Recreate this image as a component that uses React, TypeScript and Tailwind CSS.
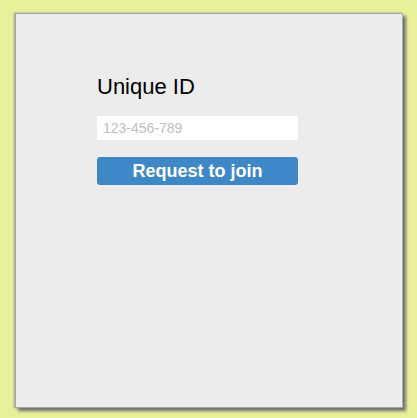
export default function App() {
  return (
    <div className="w-[417px] h-[418px] bg-[#e8f09a] pt-[13px] pl-[15px] font-['Liberation_Sans',Arial,sans-serif]">
      <div className="w-[388px] h-[395px] bg-[#ececec] border border-[#a8a8a8] shadow-[3px_3px_3px_#707070,-1px_0_2px_#9a9a9a] pt-[60px] pl-[81px]">
        <div className="w-[201px] flex flex-col">
          <h1 className="text-[22px] leading-[25px] text-black">Unique ID</h1>
          <input
            className="mt-[17px] h-[24px] bg-white px-[6px] text-[14px] text-black placeholder:text-[#c0c0c0] outline-none"
            placeholder="123-456-789"
          />
          <button className="mt-[17px] h-[28px] rounded-[3px] bg-[#3f88c8] text-white text-[18px] font-bold leading-none">
            Request to join
          </button>
        </div>
      </div>
    </div>
  );
}
